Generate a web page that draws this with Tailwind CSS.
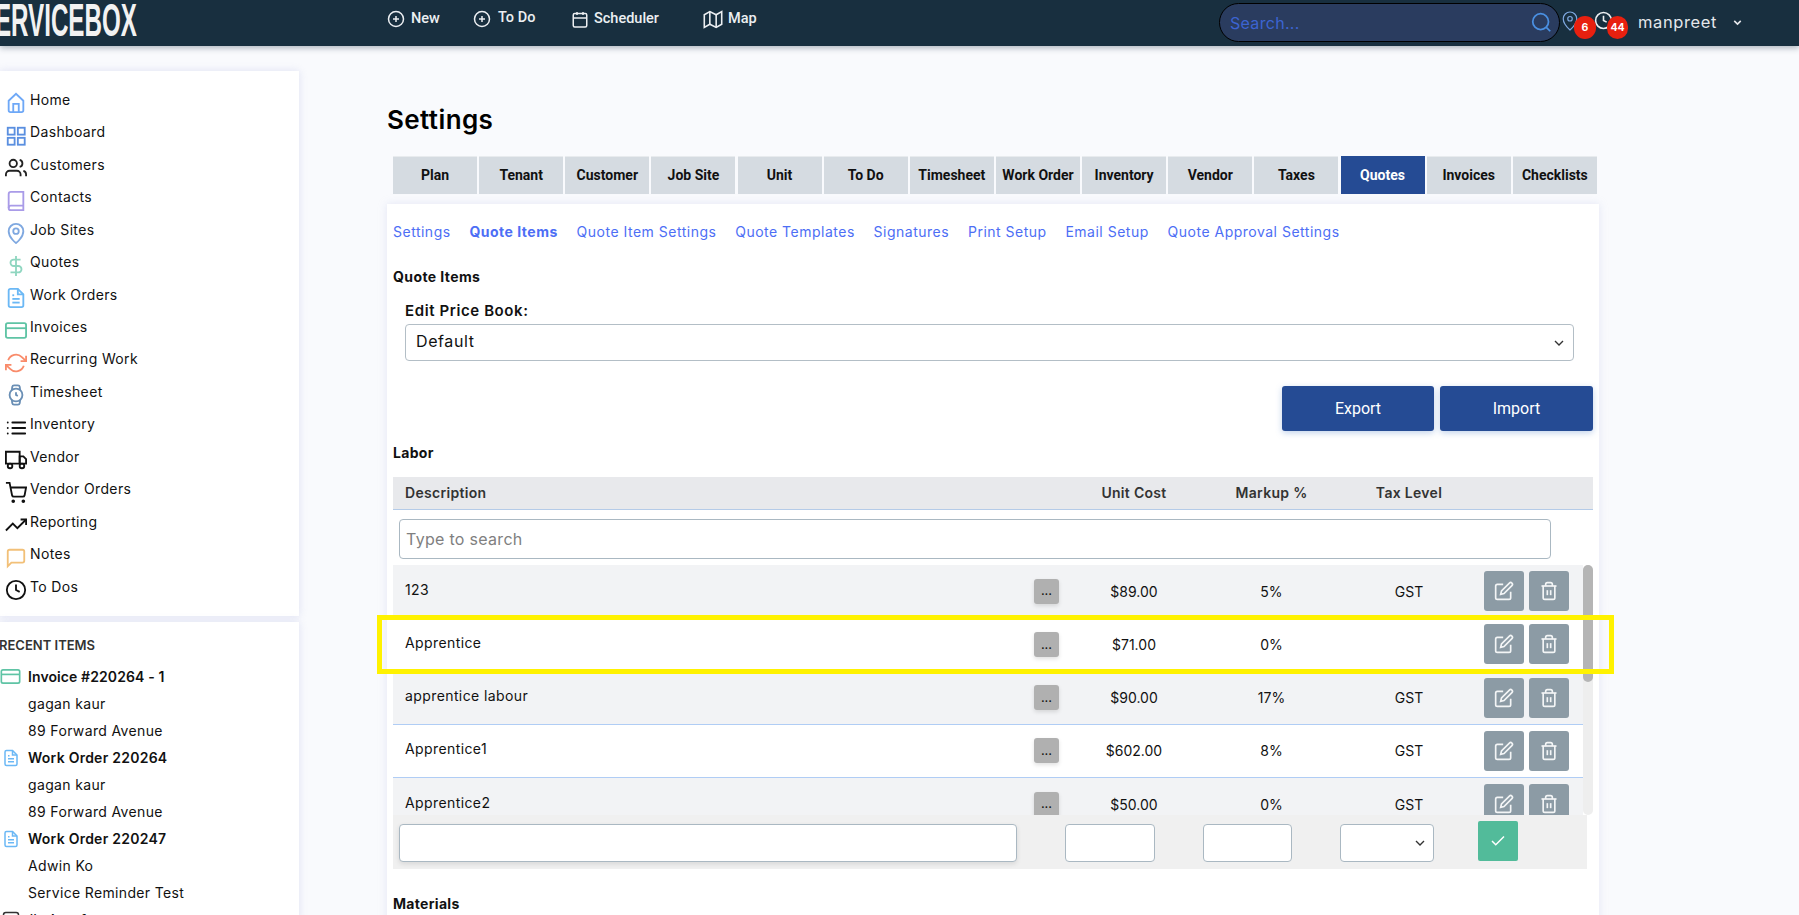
<!DOCTYPE html>
<html lang="en">
<head>
    <meta charset="UTF-8">
    <meta name="viewport" content="width=device-width, initial-scale=1.0">
    <script src="https://cdn.jsdelivr.net/npm/@tailwindcss/browser@4"></script>
    <title>Settings</title>
</head>
<body class="w-[1799px] h-[915px] overflow-hidden bg-[#f9fafd] font-[Inter,sans-serif] text-[#111] relative">
    <!-- shared icons -->
    <svg class="hidden">
        <symbol id="i-edit" viewBox="0 0 24 24"><path d="M11 4H4a2 2 0 0 0-2 2v14a2 2 0 0 0 2 2h14a2 2 0 0 0 2-2v-7"/><path d="M18.5 2.5a2.121 2.121 0 0 1 3 3L12 15l-4 1 1-4 9.5-9.5z"/></symbol>
        <symbol id="i-trash" viewBox="0 0 24 24"><path d="M3 6h18"/><path d="M19 6v14a2 2 0 0 1-2 2H7a2 2 0 0 1-2-2V6m3 0V4a2 2 0 0 1 2-2h4a2 2 0 0 1 2 2v2"/><path d="M10 11v6"/><path d="M14 11v6"/></symbol>
        <symbol id="i-plus" viewBox="0 0 24 24"><circle cx="12" cy="12" r="10"/><path d="M12 8v8"/><path d="M8 12h8"/></symbol>
        <symbol id="i-file" viewBox="0 0 24 24"><path d="M14 2H6a2 2 0 0 0-2 2v16a2 2 0 0 0 2 2h12a2 2 0 0 0 2-2V8z"/><path d="M14 2v6h6"/><path d="M16 13H8"/><path d="M16 17H8"/><path d="M10 9H8"/></symbol>
        <symbol id="i-card" viewBox="0 0 24 18"><rect x="1" y="1" width="22" height="16" rx="2"/><path d="M1 6.5h22"/></symbol>
        <symbol id="i-chev" viewBox="0 0 24 24"><path d="M6 9l6 6 6-6"/></symbol>
    </svg>

    <header class="h-[46px] bg-[#182f3f] flex items-center shadow-[0_2px_6px_rgba(30,50,70,0.35)] relative z-10 text-[#eceff2]">
        <div class="w-[137px] h-[46px] overflow-hidden flex justify-end items-center shrink-0">
            <span class="shrink-0 whitespace-nowrap origin-right scale-x-[.525] font-['Liberation_Sans',sans-serif] font-bold text-[46px] text-[#f2f2f2] -mt-[5px]">SERVICEBOX</span>
        </div>
        <nav class="flex items-center font-[Roboto,sans-serif] font-medium text-[14.5px] -mt-[8px]">
            <svg class="ml-[250px] w-[18px] h-[18px] fill-none stroke-current stroke-2"><use href="#i-plus"/></svg>
            <span class="ml-[6px] w-[31px]">New</span>
            <svg class="ml-[31px] w-[18px] h-[18px] fill-none stroke-current stroke-2"><use href="#i-plus"/></svg>
            <span class="ml-[7px] w-[40px] -mt-[3px]">To Do</span>
            <svg class="ml-[33px] w-[18px] h-[19px] fill-none stroke-current stroke-2" viewBox="0 0 24 24"><rect x="3" y="4" width="18" height="18" rx="2"/><path d="M16 2v4"/><path d="M8 2v4"/><path d="M3 10h18"/></svg>
            <span class="ml-[5px] w-[66px]">Scheduler</span>
            <svg class="ml-[43px] w-[20px] h-[19px] fill-none stroke-current stroke-2" viewBox="0 0 24 24"><path d="M1 6v16l7-4 8 4 7-4V2l-7 4-8-4z"/><path d="M8 2v16"/><path d="M16 6v16"/></svg>
            <span class="ml-[5px]">Map</span>
        </nav>
        <div class="absolute left-[1219px] top-[3px] w-[341px] h-[39px] rounded-full bg-[#2a3c5f] border border-black flex items-center pl-[10px] pr-[7px]">
            <input class="flex-1 min-w-0 bg-transparent outline-none text-[16px] tracking-[0.3px] placeholder:text-[#3c64d2]" placeholder="Search...">
            <svg class="w-[21px] h-[21px] fill-none stroke-[#4a90e2] stroke-2" viewBox="0 0 24 24"><circle cx="11" cy="11" r="9"/><path d="M22 22l-4.5-4.5"/></svg>
        </div>
        <svg class="absolute left-[1561px] top-[10px] w-[18px] h-[22px] fill-none stroke-[#7fa8e0] stroke-[1.6]" viewBox="0 0 24 28"><path d="M21 11c0 7-9 15-9 15s-9-8-9-15a9 9 0 0 1 18 0z"/><circle cx="12" cy="11" r="3"/></svg>
        <svg class="absolute left-[1594px] top-[11px] w-[19px] h-[19px] fill-none stroke-[#eceff2] stroke-2" viewBox="0 0 24 24"><circle cx="12" cy="12" r="10"/><path d="M12 6v6l4 2"/></svg>
        <span class="absolute left-[1574px] top-[16px] w-[22px] h-[23px] rounded-full bg-[#e8200f] text-white text-[10.5px] font-bold flex items-center justify-center">6</span>
        <span class="absolute left-[1607px] top-[16px] w-[21px] h-[23px] rounded-full bg-[#e8200f] text-white text-[10.5px] font-bold flex items-center justify-center">44</span>
        <span class="absolute left-[1638px] top-[10px] text-[16.5px] tracking-[0.6px] text-[#e5e7eb]">manpreet</span>
        <svg class="absolute left-[1731px] top-[16px] w-[13px] h-[13px] fill-none stroke-[#e5e7eb] stroke-[3]"><use href="#i-chev"/></svg>
    </header>

    <div class="flex items-start">
        <aside class="w-[299px] shrink-0 mt-[25px] text-[14px] tracking-[0.35px]">
            <ul class="bg-white shadow-[0_0_8px_rgba(190,195,230,0.45)] pt-[12px] pb-[13.5px] pl-[5px]">
                <li class="h-[32.47px] flex items-center"><svg class="w-[22px] h-[22px] mt-2 mr-[3px] fill-none stroke-[#6ea8f7] stroke-2" viewBox="0 0 24 24"><path d="M4 9.5 12 2l8 7.5V20a2 2 0 0 1-2 2H6a2 2 0 0 1-2-2z"/><path d="M9 22V13h6v9"/></svg>Home</li>
                <li class="h-[32.47px] flex items-center"><svg class="w-[22px] h-[22px] mt-2 mr-[3px] fill-none stroke-[#5a8fe0] stroke-2" viewBox="0 0 24 24"><rect x="3" y="3" width="7.5" height="7.5"/><rect x="14" y="3" width="7.5" height="7.5"/><rect x="14" y="14" width="7.5" height="7.5"/><rect x="3" y="14" width="7.5" height="7.5"/></svg>Dashboard</li>
                <li class="h-[32.47px] flex items-center"><svg class="w-[22px] h-[22px] mt-2 mr-[3px] fill-none stroke-[#222] stroke-2" viewBox="0 0 24 24"><path d="M17 21v-2a4 4 0 0 0-4-4H5a4 4 0 0 0-4 4v2"/><circle cx="9" cy="7" r="4"/><path d="M23 21v-2a4 4 0 0 0-3-3.87"/><path d="M16 3.13a4 4 0 0 1 0 7.75"/></svg>Customers</li>
                <li class="h-[32.47px] flex items-center"><svg class="w-[22px] h-[22px] mt-2 mr-[3px] fill-none stroke-[#a99be8] stroke-2" viewBox="0 0 24 24"><path d="M4 19.5A2.5 2.5 0 0 1 6.5 17H20"/><path d="M6.5 2H20v20H6.5A2.5 2.5 0 0 1 4 19.5v-15A2.5 2.5 0 0 1 6.5 2z"/></svg>Contacts</li>
                <li class="h-[32.47px] flex items-center"><svg class="w-[22px] h-[22px] mt-2 mr-[3px] fill-none stroke-[#7fa8e0] stroke-2" viewBox="0 0 24 24"><path d="M20 10c0 7-8 13-8 13s-8-6-8-13a8 8 0 0 1 16 0z"/><circle cx="12" cy="10" r="3"/></svg>Job Sites</li>
                <li class="h-[32.47px] flex items-center"><svg class="w-[22px] h-[22px] mt-2 mr-[3px] fill-none stroke-[#8fd6c0] stroke-2" viewBox="0 0 24 24"><path d="M12 1v22"/><path d="M17 5H9.5a3.5 3.5 0 0 0 0 7h5a3.5 3.5 0 0 1 0 7H6"/></svg>Quotes</li>
                <li class="h-[32.47px] flex items-center"><svg class="w-[22px] h-[22px] mt-2 mr-[3px] fill-none stroke-[#6bb8f5] stroke-2"><use href="#i-file"/></svg>Work Orders</li>
                <li class="h-[32.47px] flex items-center"><svg class="w-[22px] h-[17px] mt-2 mr-[3px] fill-none stroke-[#5fc4a5] stroke-2"><use href="#i-card"/></svg>Invoices</li>
                <li class="h-[32.47px] flex items-center"><svg class="w-[22px] h-[22px] mt-2 mr-[3px] fill-none stroke-[#f98b6a] stroke-2" viewBox="0 0 24 24"><path d="M23 4v6h-6"/><path d="M1 20v-6h6"/><path d="M3.5 9a9 9 0 0 1 14.9-3.4L23 10M1 14l4.6 4.4A9 9 0 0 0 20.5 15"/></svg>Recurring Work</li>
                <li class="h-[32.47px] flex items-center"><svg class="w-[22px] h-[22px] mt-2 mr-[3px] fill-none stroke-[#6a8fb5] stroke-2" viewBox="0 0 24 24"><circle cx="12" cy="12" r="7"/><path d="M12 9v3l2 1"/><path d="M16.5 17.4l-.4 3.4a2 2 0 0 1-2 1.7h-4.2a2 2 0 0 1-2-1.7l-.4-3.4m0-10.8.4-3.4a2 2 0 0 1 2-1.7h4.2a2 2 0 0 1 2 1.7l.4 3.4"/></svg>Timesheet</li>
                <li class="h-[32.47px] flex items-center"><svg class="w-[22px] h-[22px] mt-2 mr-[3px] fill-none stroke-[#111] stroke-2" stroke-linecap="round" viewBox="0 0 24 24"><path d="M8 6h14"/><path d="M8 12h14"/><path d="M8 18h14"/><path d="M3 6h.01"/><path d="M3 12h.01"/><path d="M3 18h.01"/></svg>Inventory</li>
                <li class="h-[32.47px] flex items-center"><svg class="w-[22px] h-[22px] mt-2 mr-[3px] fill-none stroke-[#111] stroke-2" viewBox="0 0 24 24"><path d="M1 3h15v13H1z"/><path d="M16 8h4l3 3v5h-7z"/><circle cx="5.5" cy="18.5" r="2.5"/><circle cx="18.5" cy="18.5" r="2.5"/></svg>Vendor</li>
                <li class="h-[32.47px] flex items-center"><svg class="w-[22px] h-[22px] mt-2 mr-[3px] fill-none stroke-[#111] stroke-2" viewBox="0 0 24 24"><circle cx="9" cy="21" r="1"/><circle cx="20" cy="21" r="1"/><path d="M1 1h4l2.7 13.4a2 2 0 0 0 2 1.6h9.7a2 2 0 0 0 2-1.6L23 6H6"/></svg>Vendor Orders</li>
                <li class="h-[32.47px] flex items-center"><svg class="w-[22px] h-[22px] mt-2 mr-[3px] fill-none stroke-[#111] stroke-2" viewBox="0 0 24 24"><path d="M23 6l-9.5 9.5-5-5L1 18"/><path d="M17 6h6v6"/></svg>Reporting</li>
                <li class="h-[32.47px] flex items-center"><svg class="w-[22px] h-[22px] mt-2 mr-[3px] fill-none stroke-[#f2c078] stroke-2" viewBox="0 0 24 24"><path d="M21 15a2 2 0 0 1-2 2H7l-4 4V5a2 2 0 0 1 2-2h14a2 2 0 0 1 2 2z"/></svg>Notes</li>
                <li class="h-[32.47px] flex items-center"><svg class="w-[22px] h-[22px] mt-2 mr-[3px] fill-none stroke-[#111] stroke-2" viewBox="0 0 24 24"><circle cx="12" cy="12" r="10"/><path d="M12 6v6l4 2"/></svg>To Dos</li>
            </ul>
            <div class="bg-white shadow-[0_0_8px_rgba(190,195,230,0.45)] mt-[6px] h-[300px] pt-[14px] overflow-hidden">
                <h3 class="h-[18px] -ml-[1px] text-[13px] font-semibold tracking-normal text-[#333] leading-[18px]">RECENT ITEMS</h3>
                <ul class="mt-[9px] leading-[27px]">
                    <li class="h-[27px] flex items-center font-semibold tracking-[0.1px]"><svg class="w-[21px] h-[15px] mr-[7px] fill-none stroke-[#5fc4a5] stroke-2"><use href="#i-card"/></svg>Invoice #220264 - 1</li>
                    <li class="h-[27px] pl-[28px]">gagan kaur</li>
                    <li class="h-[27px] pl-[28px]">89 Forward Avenue</li>
                    <li class="h-[27px] flex items-center font-semibold tracking-[0.25px]"><svg class="w-[18px] h-[18px] ml-[2px] mr-[8px] fill-none stroke-[#6bb8f5] stroke-2"><use href="#i-file"/></svg>Work Order 220264</li>
                    <li class="h-[27px] pl-[28px]">gagan kaur</li>
                    <li class="h-[27px] pl-[28px]">89 Forward Avenue</li>
                    <li class="h-[27px] flex items-center font-semibold tracking-[0.25px]"><svg class="w-[18px] h-[18px] ml-[2px] mr-[8px] fill-none stroke-[#6bb8f5] stroke-2"><use href="#i-file"/></svg>Work Order 220247</li>
                    <li class="h-[27px] pl-[28px]">Adwin Ko</li>
                    <li class="h-[27px] pl-[28px]">Service Reminder Test</li>
                    <li class="h-[27px] flex items-center font-semibold"><svg class="w-[18px] h-[18px] ml-[2px] mr-[8px] fill-none stroke-[#333] stroke-2" viewBox="0 0 24 24"><rect x="2" y="2" width="20" height="20" rx="3"/></svg>#take of</li>
                </ul>
            </div>
        </aside>

        <main class="ml-[88px] w-[1212px] shrink-0">
            <h1 class="mt-[56px] h-[36px] text-[26px] leading-[36px] font-semibold tracking-[0.4px] text-black">Settings</h1>
            <div class="mt-[18px] ml-[6px] flex gap-[2.15px] font-[Roboto,sans-serif] font-bold text-[14px] text-[#111]">
                <a class="w-[84px] h-[38px] flex items-center justify-center bg-[#d5dbe1] border-t border-[#e8ebee]">Plan</a>
                <a class="w-[84px] h-[38px] flex items-center justify-center bg-[#d5dbe1] border-t border-[#e8ebee]">Tenant</a>
                <a class="w-[84px] h-[38px] flex items-center justify-center bg-[#d5dbe1] border-t border-[#e8ebee]">Customer</a>
                <a class="w-[84px] h-[38px] flex items-center justify-center bg-[#d5dbe1] border-t border-[#e8ebee]">Job Site</a>
                <a class="w-[84px] h-[38px] flex items-center justify-center bg-[#d5dbe1] border-t border-[#e8ebee]">Unit</a>
                <a class="w-[84px] h-[38px] flex items-center justify-center bg-[#d5dbe1] border-t border-[#e8ebee]">To Do</a>
                <a class="w-[84px] h-[38px] flex items-center justify-center bg-[#d5dbe1] border-t border-[#e8ebee]">Timesheet</a>
                <a class="w-[84px] h-[38px] flex items-center justify-center bg-[#d5dbe1] border-t border-[#e8ebee]">Work Order</a>
                <a class="w-[84px] h-[38px] flex items-center justify-center bg-[#d5dbe1] border-t border-[#e8ebee]">Inventory</a>
                <a class="w-[84px] h-[38px] flex items-center justify-center bg-[#d5dbe1] border-t border-[#e8ebee]">Vendor</a>
                <a class="w-[84px] h-[38px] flex items-center justify-center bg-[#d5dbe1] border-t border-[#e8ebee]">Taxes</a>
                <a class="w-[84px] h-[38px] flex items-center justify-center bg-[#254b94] text-white">Quotes</a>
                <a class="w-[84px] h-[38px] flex items-center justify-center bg-[#d5dbe1] border-t border-[#e8ebee]">Invoices</a>
                <a class="w-[84px] h-[38px] flex items-center justify-center bg-[#d5dbe1] border-t border-[#e8ebee]">Checklists</a>
            </div>

            <section class="mt-[10px] h-[720px] bg-white px-[6px] shadow-[0_0_8px_rgba(190,195,230,0.35)]">
                <div class="pt-[18px] h-[38px] flex gap-[18.8px] text-[14px] leading-[20px] tracking-[0.5px] text-[#4d6ef5]">
                    <a>Settings</a><a class="font-bold">Quote Items</a><a>Quote Item Settings</a><a>Quote Templates</a><a>Signatures</a><a>Print Setup</a><a>Email Setup</a><a>Quote Approval Settings</a>
                </div>
                <h3 class="mt-[25px] h-[20px] text-[14px] tracking-[0.4px] leading-[20px] font-bold">Quote Items</h3>
                <label class="block mt-[14px] ml-[12px] h-[20px] text-[15px] tracking-[0.6px] leading-[20px] font-semibold">Edit Price Book:</label>
                <div class="mt-[3px] ml-[12px] w-[1169px] h-[37px] border border-[#b3bec6] rounded-[4px] flex items-center justify-between pl-[10px] pr-[6px] text-[16px] tracking-[0.6px]">
                    <span class="-mt-[4px]">Default</span>
                    <svg class="w-[16px] h-[16px] fill-none stroke-[#333] stroke-2"><use href="#i-chev"/></svg>
                </div>
                <div class="mt-[25px] flex justify-end gap-[6px] font-[Roboto,sans-serif] text-[16px] text-white">
                    <button class="w-[152px] h-[45px] bg-[#254b94] rounded-[3px] shadow-[0_2px_6px_rgba(80,130,200,0.35)]">Export</button>
                    <button class="w-[153px] h-[45px] bg-[#254b94] rounded-[3px] shadow-[0_2px_6px_rgba(80,130,200,0.35)]">Import</button>
                </div>
                <h3 class="mt-[12px] h-[20px] text-[14px] tracking-[0.3px] leading-[20px] font-bold">Labor</h3>

                <div class="mt-[14px] w-[1200px] h-[33px] bg-[#e8e9ec] border-b border-[#b4cbe8] flex items-center pl-[12px] text-[14px] tracking-[0.3px] font-semibold text-[#333]">
                    <span class="w-[654px] -mt-px">Description</span>
                    <span class="w-[150px] text-center -mt-px">Unit Cost</span>
                    <span class="w-[125px] text-center -mt-px">Markup %</span>
                    <span class="w-[150px] text-center -mt-px">Tax Level</span>
                </div>
                <input class="block mt-[9px] ml-[6px] w-[1152px] h-[40px] border border-[#aab8c2] rounded-[4px] px-[6px] text-[16px] tracking-[0.3px] placeholder:text-[#808080]" placeholder="Type to search">

                <div class="mt-[6px] flex w-[1200px] h-[250px]">
                    <div class="w-[1190px] overflow-hidden text-[14px]">
                        <div class="h-[53.25px] bg-[#f2f3f5] border-b border-[#b0cdf5] flex items-center pl-[12px]">
                            <span class="w-[629px] mb-1 tracking-[0.4px]">123</span>
                            <button class="w-[25px] h-[25px] bg-[#b0b0b0] rounded-[3px] text-[13px] shadow-[0_2px_4px_rgba(0,0,0,0.12)]">...</button>
                            <span class="w-[150px] text-center">$89.00</span><span class="w-[125px] text-center">5%</span><span class="w-[150px] text-center">GST</span>
                            <button class="w-[40px] h-[40px] bg-[#8c9ba5] rounded-[3px] flex items-center justify-center"><svg class="w-[20px] h-[20px] fill-none stroke-[#f3f5f6] stroke-2"><use href="#i-edit"/></svg></button>
                            <button class="ml-[5px] w-[40px] h-[40px] bg-[#8c9ba5] rounded-[3px] flex items-center justify-center"><svg class="w-[20px] h-[20px] fill-none stroke-[#f3f5f6] stroke-2"><use href="#i-trash"/></svg></button>
                        </div>
                        <div class="h-[53.25px] bg-white border-b border-[#b0cdf5] flex items-center pl-[12px]">
                            <span class="w-[629px] mb-1 tracking-[0.4px]">Apprentice</span>
                            <button class="w-[25px] h-[25px] bg-[#b0b0b0] rounded-[3px] text-[13px] shadow-[0_2px_4px_rgba(0,0,0,0.12)]">...</button>
                            <span class="w-[150px] text-center">$71.00</span><span class="w-[125px] text-center">0%</span><span class="w-[150px] text-center"></span>
                            <button class="w-[40px] h-[40px] bg-[#8c9ba5] rounded-[3px] flex items-center justify-center"><svg class="w-[20px] h-[20px] fill-none stroke-[#f3f5f6] stroke-2"><use href="#i-edit"/></svg></button>
                            <button class="ml-[5px] w-[40px] h-[40px] bg-[#8c9ba5] rounded-[3px] flex items-center justify-center"><svg class="w-[20px] h-[20px] fill-none stroke-[#f3f5f6] stroke-2"><use href="#i-trash"/></svg></button>
                        </div>
                        <div class="h-[53.25px] bg-[#f2f3f5] border-b border-[#b0cdf5] flex items-center pl-[12px]">
                            <span class="w-[629px] mb-1 tracking-[0.4px]">apprentice labour</span>
                            <button class="w-[25px] h-[25px] bg-[#b0b0b0] rounded-[3px] text-[13px] shadow-[0_2px_4px_rgba(0,0,0,0.12)]">...</button>
                            <span class="w-[150px] text-center">$90.00</span><span class="w-[125px] text-center">17%</span><span class="w-[150px] text-center">GST</span>
                            <button class="w-[40px] h-[40px] bg-[#8c9ba5] rounded-[3px] flex items-center justify-center"><svg class="w-[20px] h-[20px] fill-none stroke-[#f3f5f6] stroke-2"><use href="#i-edit"/></svg></button>
                            <button class="ml-[5px] w-[40px] h-[40px] bg-[#8c9ba5] rounded-[3px] flex items-center justify-center"><svg class="w-[20px] h-[20px] fill-none stroke-[#f3f5f6] stroke-2"><use href="#i-trash"/></svg></button>
                        </div>
                        <div class="h-[53.25px] bg-white border-b border-[#b0cdf5] flex items-center pl-[12px]">
                            <span class="w-[629px] mb-1 tracking-[0.4px]">Apprentice1</span>
                            <button class="w-[25px] h-[25px] bg-[#b0b0b0] rounded-[3px] text-[13px] shadow-[0_2px_4px_rgba(0,0,0,0.12)]">...</button>
                            <span class="w-[150px] text-center">$602.00</span><span class="w-[125px] text-center">8%</span><span class="w-[150px] text-center">GST</span>
                            <button class="w-[40px] h-[40px] bg-[#8c9ba5] rounded-[3px] flex items-center justify-center"><svg class="w-[20px] h-[20px] fill-none stroke-[#f3f5f6] stroke-2"><use href="#i-edit"/></svg></button>
                            <button class="ml-[5px] w-[40px] h-[40px] bg-[#8c9ba5] rounded-[3px] flex items-center justify-center"><svg class="w-[20px] h-[20px] fill-none stroke-[#f3f5f6] stroke-2"><use href="#i-trash"/></svg></button>
                        </div>
                        <div class="h-[53.25px] bg-[#f2f3f5] border-b border-[#b0cdf5] flex items-center pl-[12px]">
                            <span class="w-[629px] mb-1 tracking-[0.4px]">Apprentice2</span>
                            <button class="w-[25px] h-[25px] bg-[#b0b0b0] rounded-[3px] text-[13px] shadow-[0_2px_4px_rgba(0,0,0,0.12)]">...</button>
                            <span class="w-[150px] text-center">$50.00</span><span class="w-[125px] text-center">0%</span><span class="w-[150px] text-center">GST</span>
                            <button class="w-[40px] h-[40px] bg-[#8c9ba5] rounded-[3px] flex items-center justify-center"><svg class="w-[20px] h-[20px] fill-none stroke-[#f3f5f6] stroke-2"><use href="#i-edit"/></svg></button>
                            <button class="ml-[5px] w-[40px] h-[40px] bg-[#8c9ba5] rounded-[3px] flex items-center justify-center"><svg class="w-[20px] h-[20px] fill-none stroke-[#f3f5f6] stroke-2"><use href="#i-trash"/></svg></button>
                        </div>
                    </div>
                    <div class="w-[10px] bg-[#eeeeee] rounded-[5px]">
                        <div class="h-[117px] bg-[#b5b5b5] rounded-[5px]"></div>
                    </div>
                </div>

                <div class="w-[1194px] h-[54px] bg-[#f0f0f0] flex items-start pl-[6px]">
                    <input class="mt-[9px] w-[618px] h-[38px] bg-white border border-[#aab8c2] rounded-[4px] shadow-[0_2px_5px_rgba(0,0,0,0.1)]">
                    <input class="mt-[9px] ml-[48px] w-[90px] h-[38px] bg-white border border-[#aab8c2] rounded-[4px]">
                    <input class="mt-[9px] ml-[48px] w-[89px] h-[38px] bg-white border border-[#aab8c2] rounded-[4px]">
                    <div class="mt-[9px] ml-[48px] w-[94px] h-[38px] bg-white border border-[#aab8c2] rounded-[4px] flex items-center justify-end pr-[5px]">
                        <svg class="w-[16px] h-[16px] fill-none stroke-[#333] stroke-2"><use href="#i-chev"/></svg>
                    </div>
                    <button class="mt-[6px] ml-[44px] w-[40px] h-[40px] bg-[#52bb9a] rounded-[2px] flex items-center justify-center">
                        <svg class="w-[18px] h-[18px] fill-none stroke-white stroke-2" viewBox="0 0 24 24"><path d="M20 6 9 17l-5-5"/></svg>
                    </button>
                </div>
                <h3 class="mt-[25px] h-[20px] text-[14px] tracking-[0.3px] leading-[20px] font-bold">Materials</h3>
            </section>
        </main>
    </div>

    <!-- highlight drawn over the screenshot -->
    <div class="absolute left-[377px] top-[615px] w-[1237px] h-[59px] border-[5px] border-[#fff200] z-20"></div>
</body>
</html>
